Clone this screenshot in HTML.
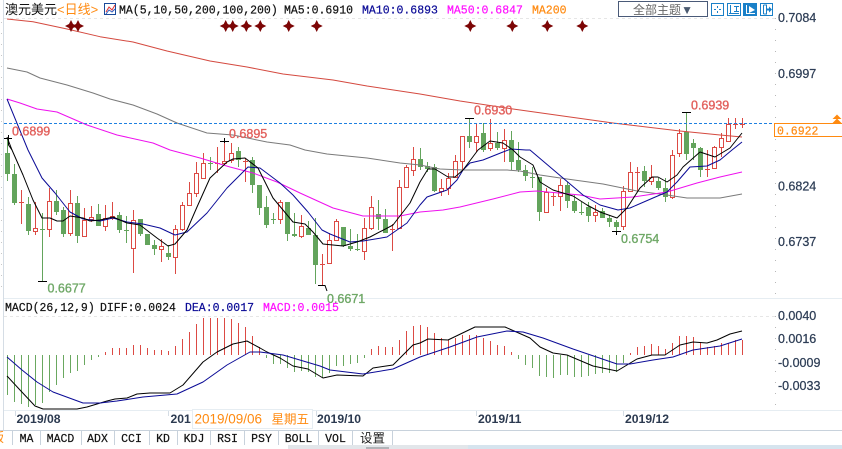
<!DOCTYPE html>
<html><head><meta charset="utf-8"><style>
html,body{margin:0;padding:0;background:#fff;overflow:hidden}
svg{display:block}
.m{font-family:"Liberation Mono","Noto Sans CJK SC",monospace;font-size:11.5px;stroke-width:.2px}
.s{font-family:"Liberation Sans",sans-serif;font-size:12.5px}
.ax{fill:#2e3e56;stroke:#2e3e56;stroke-width:.25px}
.d{font-family:"Liberation Sans",sans-serif;font-size:12.2px;font-weight:bold;fill:#2c3a50}
.r{fill:#e2605c;stroke:#e2605c;stroke-width:.35px}.g{fill:#6fa867;stroke:#6fa867;stroke-width:.35px}
.t{fill:#111;stroke:#111;text-anchor:middle}
.k{fill:#111;stroke:#111}.b{fill:#0a0a96;stroke:#0a0a96}.p{fill:#ff10ff;stroke:#ff10ff}.o{fill:#ff8a10;stroke:#ff8a10}
</style></head><body>
<svg width="842" height="449" viewBox="0 0 842 449" xmlns="http://www.w3.org/2000/svg">
<defs><path id="dm" fill="#7c0505" d="M0 -6L2 -2L6 0L2 2L0 6L-2 2L-6 0L-2 -2z"/></defs>
<rect width="842" height="449" fill="#fff"/>
<!-- frame -->
<path d="M3.500 0V430" stroke="#d5dde5" fill="none"/>
<path d="M4 298.500H842M4 410.500H842" stroke="#e6edf2" fill="none"/>
<path d="M4 18.500H775M4 316.500H775" stroke="#e6e6e6" stroke-dasharray="3 3" fill="none"/>
<path d="M775.500 18V298M775.500 316V405" stroke="#b8b8b8" stroke-dasharray="1 10" fill="none"/>
<path d="M1.500 22V295" stroke="#c8c8c8" stroke-dasharray="1 10" fill="none"/>
<path d="M0 430.500H842" stroke="#c8d2dc" fill="none"/>
<!-- green wicks -->
<path fill="none" stroke="#63a45c" d="M7.500 138V181M14.500 164V205M28.500 197V235M42.500 213V282M56.500 190V215M63.500 207V237M77.500 196V243M98.500 204V226M119.500 212V233M126.500 216V243M140.500 219V236M147.500 234V245M154.500 240V255M168.500 245V260M210.500 157V170M238.500 147V167M252.500 157V193M259.500 185V215M266.500 196V228M273.500 213V224M287.500 202V241M294.500 213V237M308.500 221V235M315.500 218V284M343.500 227V247M350.500 229V251M357.500 234V251M378.500 200V230M385.500 209V233M420.500 148V170M427.500 162V172M434.500 164V192M469.500 118V148M483.500 123V152M497.500 132V150M511.500 131V170M518.500 142V172M525.500 165V181M532.500 167V188M539.500 177V221M567.500 182V208M574.500 195V213M581.500 202V215M588.500 202V222M602.500 208V218M609.500 215V227M616.500 220V231M644.500 166V187M658.500 178V190M665.500 178V202M686.500 112V160M693.500 139V160M700.500 147V177"/>
<!-- green bodies -->
<path fill="none" stroke="#63a45c" stroke-width="5" d="M7.500 153V174M14.500 174V203M28.500 204V231M56.500 201V212M63.500 210V234M77.500 203V236M98.500 214V226M119.500 215V230M140.500 219V234M147.500 234V245M154.500 245V249M168.500 253V257M238.500 151V160M252.500 160V185M259.500 185V208M266.500 207V225M287.500 202V234M294.500 234V236M308.500 228V235M315.500 235V265M343.500 227V246M350.500 246V249M357.500 249V250M378.500 214V219M385.500 219V233M420.500 159V167M427.500 166V169M434.500 167V191M469.500 136V142M483.500 133V150M497.500 143V148M511.500 140V162M518.500 160V170M525.500 170V176M539.500 177V212M567.500 185V201M574.500 201V211M588.500 207V216M602.500 211V218M609.500 218V222M616.500 222V227M644.500 171V181M658.500 181V188M665.500 188V197M686.500 132V154M693.500 143V148M700.500 148V170"/>
<path fill="none" stroke="#63a45c" d="M40 229.500H45M124 230.500H129M208 163.500H213M271 219.500H276M530 177.500H535M579 212.500H584"/>
<!-- red wicks -->
<path fill="none" stroke="#dc4a44" d="M21.500 190V224M35.500 202V235M49.500 188V237M70.500 190V236M84.500 208V237M91.500 206V222M105.500 205V231M112.500 202V220M133.500 210V273M161.500 239V262M175.500 225V274M182.500 202V231M189.500 182V206M196.500 162V197M203.500 153V178M217.500 147V173M224.500 141V165M231.500 143V163M245.500 158V182M280.500 200V224M301.500 215V238M322.500 254V285M329.500 233V264M336.500 219V241M364.500 218V260M371.500 196V230M392.500 224V251M399.500 180V229M406.500 165V188M413.500 147V176M441.500 179V196M448.500 173V195M455.500 155V178M462.500 136V170M476.500 124V152M490.500 119V151M504.500 129V162M546.500 188V213M553.500 192V206M560.500 179V211M595.500 205V222M623.500 186V230M630.500 162V192M637.500 167V192M651.500 165V185M672.500 150V199M679.500 129V157M707.500 150V177M714.500 146V169M721.500 133V157M728.500 118V141M735.500 118V129M742.500 118V128"/>
<path fill="none" stroke="#dc4a44" d="M19 202.500H24M215 163.500H220M243 161.500H248M320 264.500H325M390 229.500H395M551 196.500H556M635 172.500H640M705 169.500H710M733 124.500H738M740 124.500H745"/>
<!-- red bodies -->
<g fill="#fff" stroke="#dc4a44">
<rect x="33.500" y="228.500" width="4" height="3"/><rect x="47.500" y="201.500" width="4" height="28"/><rect x="68.500" y="203.500" width="4" height="30"/><rect x="82.500" y="220.500" width="4" height="16"/><rect x="89.500" y="217.500" width="4" height="2"/><rect x="103.500" y="218.500" width="4" height="8"/><rect x="110.500" y="216.500" width="4" height="2"/><rect x="131.500" y="220.500" width="4" height="28"/><rect x="159.500" y="246.500" width="4" height="3"/><rect x="173.500" y="229.500" width="4" height="28"/><rect x="180.500" y="205.500" width="4" height="24"/><rect x="187.500" y="193.500" width="4" height="12"/><rect x="194.500" y="173.500" width="4" height="20"/><rect x="201.500" y="163.500" width="4" height="15"/><rect x="222.500" y="161.500" width="4" height="2"/><rect x="229.500" y="153.500" width="4" height="7"/><rect x="278.500" y="202.500" width="4" height="17"/><rect x="299.500" y="226.500" width="4" height="10"/><rect x="327.500" y="240.500" width="4" height="23"/><rect x="334.500" y="221.500" width="4" height="19"/><rect x="362.500" y="228.500" width="4" height="23"/><rect x="369.500" y="207.500" width="4" height="21"/><rect x="397.500" y="187.500" width="4" height="41"/><rect x="404.500" y="167.500" width="4" height="20"/><rect x="411.500" y="159.500" width="4" height="11"/><rect x="439.500" y="188.500" width="4" height="3"/><rect x="446.500" y="178.500" width="4" height="10"/><rect x="453.500" y="161.500" width="4" height="16"/><rect x="460.500" y="136.500" width="4" height="25"/><rect x="474.500" y="136.500" width="4" height="6"/><rect x="488.500" y="143.500" width="4" height="5"/><rect x="502.500" y="140.500" width="4" height="8"/><rect x="544.500" y="192.500" width="4" height="20"/><rect x="558.500" y="185.500" width="4" height="11"/><rect x="593.500" y="212.500" width="4" height="3"/><rect x="621.500" y="191.500" width="4" height="35"/><rect x="628.500" y="172.500" width="4" height="19"/><rect x="649.500" y="177.500" width="4" height="4"/><rect x="670.500" y="155.500" width="4" height="42"/><rect x="677.500" y="133.500" width="4" height="20"/><rect x="712.500" y="147.500" width="4" height="21"/><rect x="719.500" y="138.500" width="4" height="9"/><rect x="726.500" y="124.500" width="4" height="17"/>
</g>
<!-- MAs -->
<g fill="none" stroke-linejoin="round">
<path stroke="#d4493f" d="M7 19L33 21.700L67 29L100 36.700L133 42L167 51L210 61L247 67L283 74L333 80L367 86L420 94L460 101L513 109L570 117L613 123L680 131L720 135L742 137"/>
<path stroke="#7a7a7a" d="M7 68L27 72L40 78L67 85L93 93L110 99L133 105L157 114L177 123L207 133L233 135L267 142L290 145L305 150L327 154L367 158L400 163L420 165L440 169L463 170L507 170L520 171L540 175L567 179L603 184L637 191L667 195L687 198L720 198L742 194"/>
<path stroke="#ee10ee" d="M7 99L20 103L37 109L57 112L87 125L117 135L153 143L170 150L200 158L230 167L253 173L277 182L300 193L333 208L363 216L400 216L420 212L443 210L460 207L493 199L520 192L537 191L580 195L600 199L633 197L667 192L697 183L720 177L742 172"/>
<path stroke="#0a0a96" d="M7 99L28 150L42 178L55 193L70 212L83 219L100 221L113 218L127 222L143 224L160 228L175 235L187 232L207 213L227 188L248 167L260 168L280 183L293 195L308 212L322 230L330 234L350 242L363 241L387 237L407 223L420 205L427 197L447 190L457 180L463 170L470 163L483 160L503 152L511 149L526 150L530 150L563 178L583 195L600 205L618 210L630 208L653 198L667 192L677 182L690 167L707 166L720 160L732 150L742 142"/>
<path stroke="#000" d="M7 137L12 150L23 175L33 200L42 218L50 218L57 221L63 221L70 216L83 218L90 221L100 220L113 217L127 223L140 225L157 238L168 246L175 244L187 230L197 207L210 178L227 162L233 159L245 158L258 168L273 198L293 222L305 224L313 232L323 244L333 245L343 246L357 242L370 237L393 225L410 203L420 182L428 169L435 169L448 177L455 177L463 170L478 150L490 141L503 143L513 150L520 157L533 165L540 182L553 190L573 196L587 205L600 212L617 218L627 208L640 188L652 177L658 177L667 182L677 175L683 167L700 152L715 157L730 148L742 133"/>
</g>
<!-- price line -->
<path d="M4 123.500H775" stroke="#1e80e0" stroke-dasharray="3 2" fill="none"/>
<!-- + markers -->
<path fill="none" stroke="#000" d="M4 138.500H12M8.500 135V145L12 150M220 141.500H229M224.500 138V143M465 118.500H474M682 112.500H691M38 281.500H47M318 285.500H325L327 291M612 231.500H621M616.500 231V235"/>
<!-- diamonds -->
<use href="#dm" x="71" y="26"/><use href="#dm" x="78" y="26"/><use href="#dm" x="225.700" y="26"/><use href="#dm" x="232.700" y="26"/><use href="#dm" x="246.300" y="26"/><use href="#dm" x="260.300" y="26"/><use href="#dm" x="288.700" y="26"/><use href="#dm" x="316.700" y="26"/><use href="#dm" x="470.300" y="26"/><use href="#dm" x="512.300" y="26"/><use href="#dm" x="547.300" y="26"/><use href="#dm" x="582.300" y="26"/>
<!-- labels -->
<g class="s">
<text x="12" y="135.500" class="r">0.6899</text>
<text x="229" y="138" class="r">0.6895</text>
<text x="474" y="114.500" class="r">0.6930</text>
<text x="691" y="109.500" class="r">0.6939</text>
<text x="47.500" y="292.500" class="g">0.6677</text>
<text x="327" y="303" class="g">0.6671</text>
<text x="621" y="243" class="g">0.6754</text>
</g>
<!-- MACD histogram -->
<path fill="none" stroke="#6aa860" d="M7.500 355V395M14.500 355V402M21.500 355V404M28.500 355V407M35.500 355V405M42.500 355V403M49.500 355V392M56.500 355V385M63.500 355V378M70.500 355V373M77.500 355V371M84.500 355V365M91.500 355V360M98.500 355V357M266.500 355V358M273.500 355V364M280.500 355V364M287.500 355V368M294.500 355V372M301.500 355V371M308.500 355V372M315.500 355V377M322.500 355V378M329.500 355V373M336.500 355V366M343.500 355V366M350.500 355V364M357.500 355V363M364.500 355V358M518.500 355V359M525.500 355V365M532.500 355V368M539.500 355V376M546.500 355V377M553.500 355V378M560.500 355V375M567.500 355V375M574.500 355V377M581.500 355V377M588.500 355V376M595.500 355V374M602.500 355V373M609.500 355V373M616.500 355V372M623.500 355V363"/>
<path fill="none" stroke="#dc4a44" d="M105.500 355V352M112.500 355V348M119.500 355V348M126.500 355V348M133.500 355V345M140.500 355V345M147.500 355V348M154.500 355V350M161.500 355V350M168.500 355V351M175.500 355V346M182.500 355V339M189.500 355V332M196.500 355V324M203.500 355V318M210.500 355V318M217.500 355V318M224.500 355V318M231.500 355V319M238.500 355V323M245.500 355V327M252.500 355V336M259.500 355V347M371.500 355V349M378.500 355V346M385.500 355V347M392.500 355V347M399.500 355V340M406.500 355V331M413.500 355V326M420.500 355V325M427.500 355V327M434.500 355V333M441.500 355V338M448.500 355V340M455.500 355V338M462.500 355V335M469.500 355V335M476.500 355V335M483.500 355V338M490.500 355V341M497.500 355V345M504.500 355V346M511.500 355V352M630.500 355V353M637.500 355V347M644.500 355V346M651.500 355V344M658.500 355V346M665.500 355V349M672.500 355V343M679.500 355V336M686.500 355V336M693.500 355V337M700.500 355V342M707.500 355V347M714.500 355V346M721.500 355V343M728.500 355V343M735.500 355V340M742.500 355V340"/>
<g fill="none" stroke-linejoin="round">
<path stroke="#000" d="M7 376L20 390L35 406L43 409L77 409L87 407L107 401L115 399L127 398L137 394L150 393L170 393L183 385L203 362L217 352L233 344L247 341L260 348L267 352L280 358L293 366L308 369L323 378L337 375L363 376L373 368L393 365L413 345L420 343L428 339L448 340L475 327L505 327L530 338L540 347L553 353L567 355L593 366L617 371L637 359L652 355L665 355L680 345L693 342L707 343L717 340L730 334L742 331"/>
<path stroke="#0a0a96" d="M7 357L22 370L37 382L53 392L83 403L100 403L117 401L143 397L177 394L203 382L227 365L250 352L260 352L283 355L320 366L330 370L363 374L393 369L420 357L450 347L477 337L507 331L523 332L543 338L573 349L617 364L630 364L653 360L673 357L693 350L720 346L742 339"/>
</g>
<!-- axis labels -->
<g class="s ax">
<text x="778" y="22">0.7084</text><text x="778" y="78">0.6997</text><text x="778" y="190.500">0.6824</text><text x="778" y="246">0.6737</text>
<text x="778" y="320">0.0040</text><text x="778" y="343">0.0016</text><text x="778" y="367">-0.0009</text><text x="778" y="390">-0.0033</text>
</g>
<!-- price tag -->
<rect x="774.500" y="123.500" width="70" height="13" fill="#fff" stroke="#ff8a10"/>
<text x="777" y="134.500" class="m o">0.6922</text>
<path fill="#ff8a10" d="M837 114.500l4.500 4.500h-9zM837 118.500l4.500 4.500h-9z"/>
<!-- header legend -->
<text x="5" y="14" font-family="'Liberation Sans','Noto Sans CJK SC',sans-serif" font-size="13" fill="#111">澳元美元</text>
<text x="57" y="14" font-family="'Liberation Sans','Noto Sans CJK SC',sans-serif" font-size="13" fill="#ff8a10">&lt;日线&gt;</text>
<rect x="104.500" y="3.500" width="11" height="11" fill="#fff" stroke="#1a4a9a"/>
<path d="M106 12L109 7L112 10L115 5" stroke="#e03030" fill="none"/><path d="M106 14L109 10L112 12L115 9" stroke="#3060c0" fill="none"/>
<g class="m">
<text x="119" y="13.500" class="k">MA(5,10,50,200,100,200)</text>
<text x="284" y="13.500" class="k">MA5:0.6910</text>
<text x="362" y="13.500" class="b">MA10:0.6893</text>
<text x="447" y="13.500" class="p">MA50:0.6847</text>
<text x="532" y="13.500" class="o">MA200</text>
</g>
<!-- toolbar -->
<rect x="618.500" y="1.500" width="89" height="15" fill="#fff" stroke="#4a5a78"/>
<text x="663" y="14" text-anchor="middle" font-family="'Liberation Sans','Noto Sans CJK SC',sans-serif" font-size="12" fill="#666">全部主题<tspan fill="#4a5a70">▼</tspan></text>
<g fill="#fff" stroke="#1a80c8">
<rect x="711.500" y="3.500" width="12" height="12"/><rect x="727.500" y="3.500" width="13" height="12"/><rect x="760.500" y="3.500" width="12" height="12"/>
</g>
<rect x="743" y="3" width="14" height="13" fill="#1a80c8"/>
<path fill="none" stroke="#1a80c8" d="M717.500 6V8M717.500 11V13M714 9.500H716M719 9.500H721M730.500 5V13M729 13.500H739M736.500 6V12M734 6.500H739M734 11.500H739"/>
<path fill="none" stroke="#fff" d="M746.500 5V13.500H755"/><path fill="#fff" d="M749 6L755 10L749 13z"/>
<path fill="none" stroke="#1a80c8" d="M763.500 5V14M763.500 5H766.500V14H763.500"/><path fill="#1a80c8" d="M767 8.500H769V6.500L772 9.500L769 12.500V10.500H767z"/>
<!-- MACD legend -->
<g class="m">
<text x="5" y="311" class="k">MACD(26,12,9)</text>
<text x="100" y="311" class="k">DIFF:0.0024</text>
<text x="185" y="311" class="b">DEA:0.0017</text>
<text x="263" y="311" class="p">MACD:0.0015</text>
</g>
<!-- dates -->
<path d="M15.500 411V416M168.500 411V416M316.500 411V416M476.500 411V416M623.500 411V416" stroke="#d5dde5" fill="none"/>
<text x="16.500" y="423" class="d">2019/08</text>
<text x="170.500" y="423" class="d">201</text>
<text x="317" y="423" class="d">2019/10</text>
<text x="478" y="423" class="d">2019/11</text>
<text x="625" y="423" class="d">2019/12</text>
<rect x="192.500" y="409.500" width="120" height="19" fill="#fff" stroke="#e6edf2"/>
<text x="194.500" y="423.500" font-family="'Liberation Sans','Noto Sans CJK SC',sans-serif" font-size="13.500" fill="#ff8a10">2019/09/06</text>
<text x="271.500" y="423.500" font-family="'Liberation Sans','Noto Sans CJK SC',sans-serif" font-size="12.500" fill="#ff8a10">星期五</text>
<!-- tabs -->
<path fill="none" stroke="#c8d2dc" d="M12.500 431V445M40.500 431V445M81.500 431V445M114.500 431V445M149.500 431V445M177.500 431V445M210.500 431V445M244.500 431V445M278.500 431V445M318.500 431V445M352.500 431V445M392.500 431V445"/>
<text x="-9" y="442" font-family="'Liberation Sans','Noto Sans CJK SC',sans-serif" font-size="13" fill="#ff8a10">版</text>
<g class="m t">
<text x="26.500" y="442">MA</text><text x="60.500" y="442">MACD</text><text x="97.500" y="442">ADX</text><text x="131.500" y="442">CCI</text><text x="163" y="442">KD</text><text x="194" y="442">KDJ</text><text x="227.500" y="442">RSI</text><text x="261.500" y="442">PSY</text><text x="298.500" y="442">BOLL</text><text x="335.500" y="442">VOL</text>
</g>
<text x="372.500" y="442.500" text-anchor="middle" font-family="'Liberation Sans','Noto Sans CJK SC',sans-serif" font-size="12.500" fill="#222">设置</text>
<!-- bottom strip -->
<rect x="288" y="445" width="180" height="4" fill="#e2e6ea"/>
<rect x="366" y="447" width="23" height="2" fill="#b0b4b8"/>
<rect x="468" y="445" width="374" height="4" fill="#d6e4ee"/>
</svg>
</body></html>
